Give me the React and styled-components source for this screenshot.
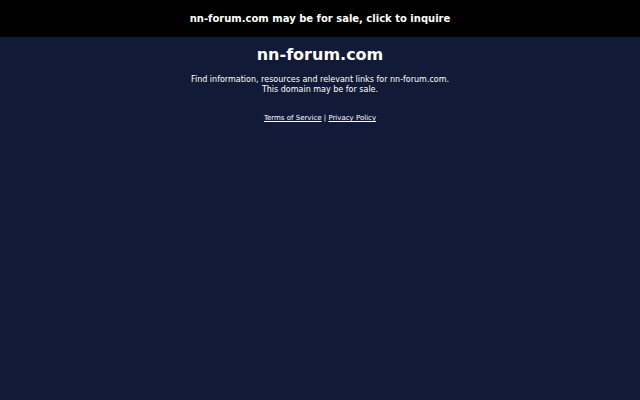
import styled, { createGlobalStyle } from 'styled-components';

const GlobalStyle = createGlobalStyle`
  html, body {
    margin: 0;
    padding: 0;
    background: #111b37;
    font-family: "DejaVu Sans", sans-serif;
  }
`;

const Page = styled.div`
  min-height: 400px;
  background: #111b37;
  color: #ffffff;
`;

const Banner = styled.a`
  display: flex;
  align-items: center;
  justify-content: center;
  height: 37px;
  background: #000000;
  color: #ffffff;
  font-size: 10px;
  font-weight: 700;
  text-decoration: none;
`;

const Main = styled.main`
  display: flex;
  flex-direction: column;
  align-items: center;
  text-align: center;
  padding-top: 8px;
`;

const Title = styled.h1`
  margin: 0;
  font-size: 16px;
  font-weight: 700;
  line-height: 20px;
`;

const Intro = styled.p`
  margin: 10px 0 0;
  font-size: 8px;
  line-height: 10px;
  color: #ffffff;
`;

const Links = styled.div`
  margin-top: 19px;
  font-size: 7px;
  color: #ffffff;
`;

const Link = styled.a`
  color: #ffffff;
  text-decoration: underline;
`;

export default function App() {
  return (
    <Page>
      <GlobalStyle />
      <Banner href="#">nn-forum.com may be for sale, click to inquire</Banner>
      <Main>
        <Title>nn-forum.com</Title>
        <Intro>
          Find information, resources and relevant links for nn-forum.com.
          <br />
          This domain may be for sale.
        </Intro>
        <Links>
          <Link href="#">Terms of Service</Link> | <Link href="#">Privacy Policy</Link>
        </Links>
      </Main>
    </Page>
  );
}
